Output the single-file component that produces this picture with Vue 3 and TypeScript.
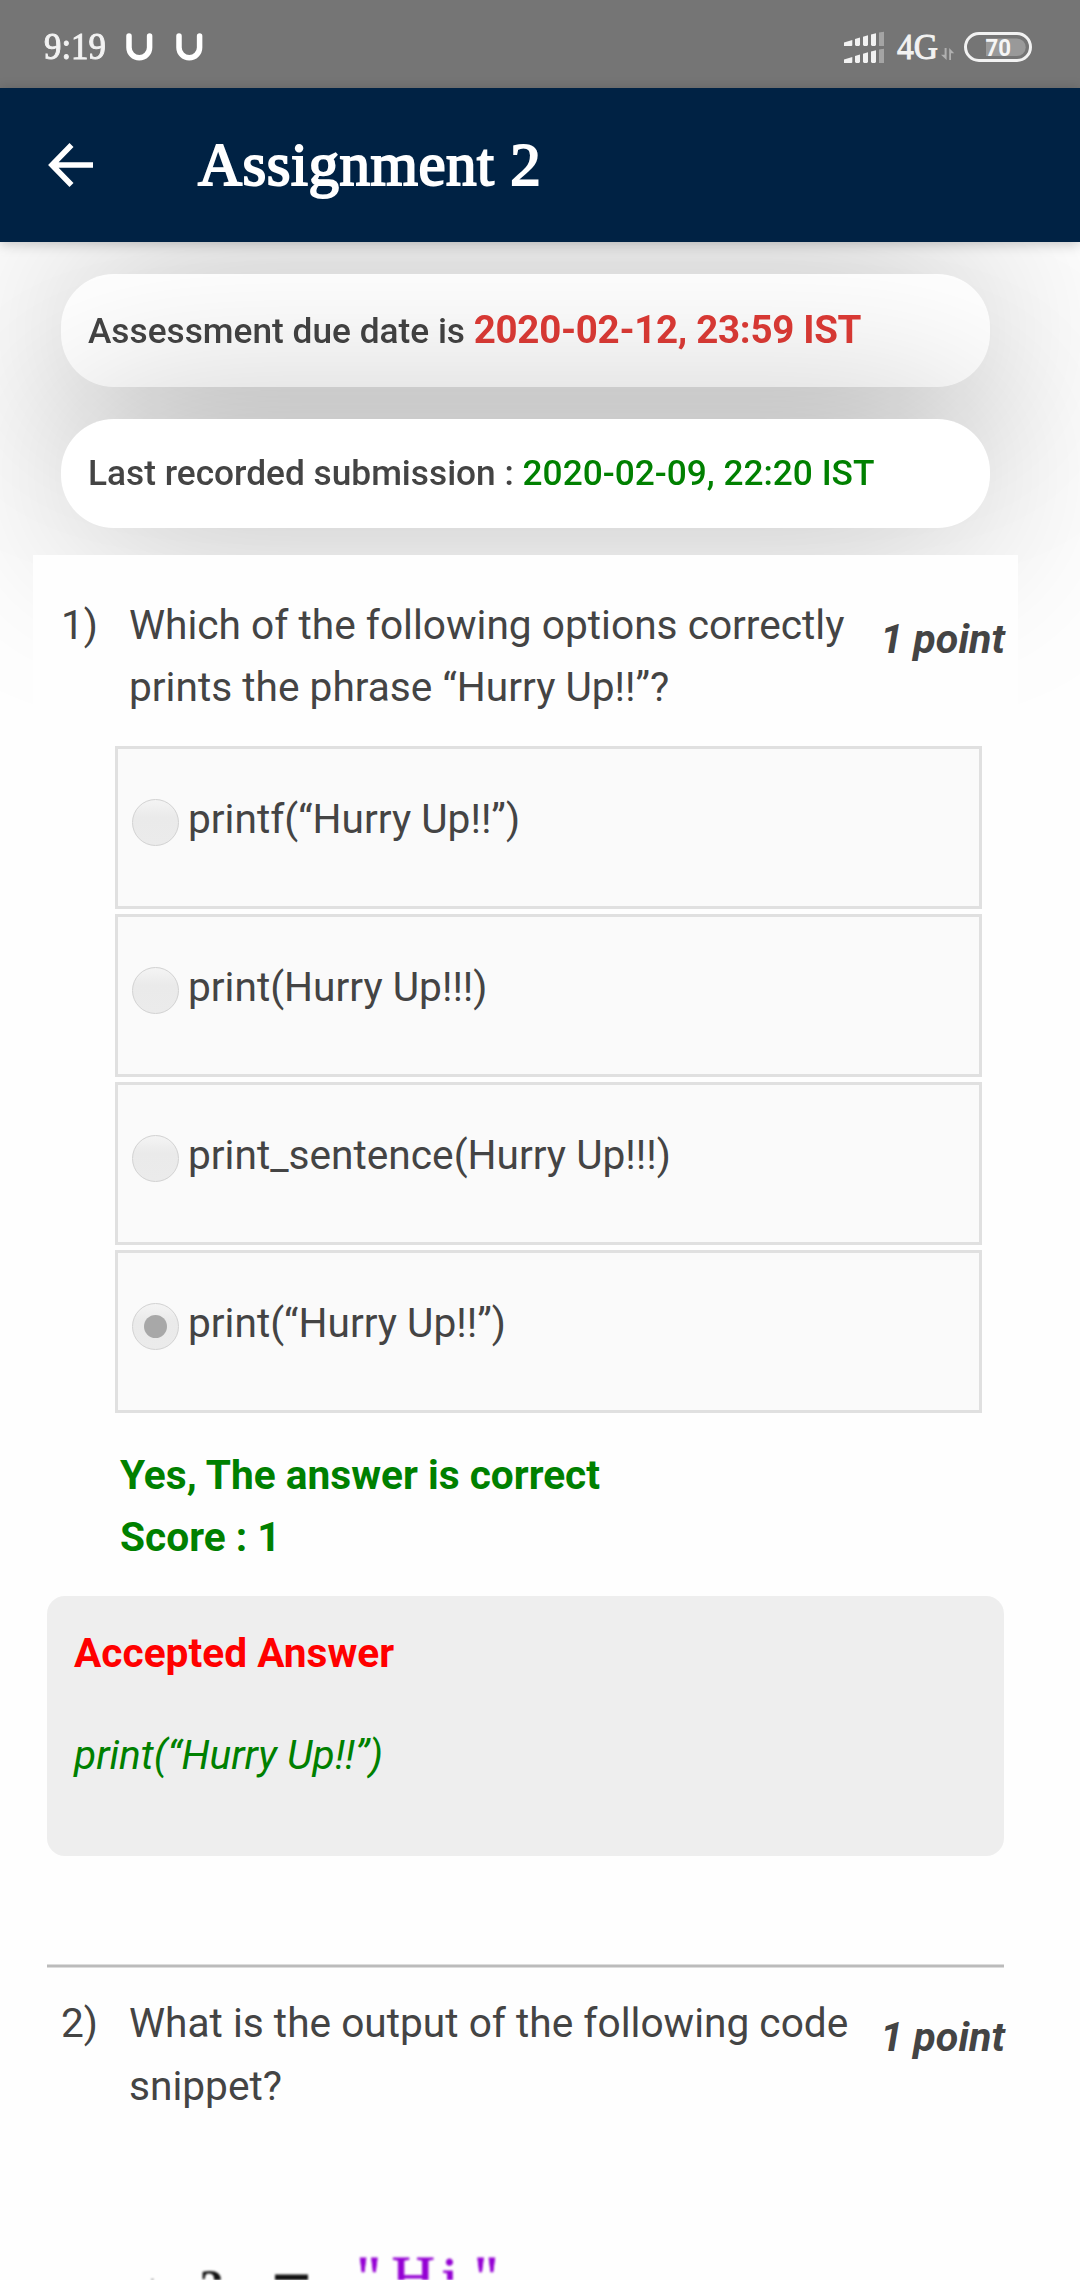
<script setup lang="ts">
interface Option {
  id: number
  label: string
  selected: boolean
}

const options: Option[] = [
  { id: 1, label: 'printf(“Hurry Up!!”)', selected: false },
  { id: 2, label: 'print(Hurry Up!!!)', selected: false },
  { id: 3, label: 'print_sentence(Hurry Up!!!)', selected: false },
  { id: 4, label: 'print(“Hurry Up!!”)', selected: true },
]
</script>

<template>
  <div class="screen">
    <div class="status">
      <span class="clock">9:19</span>
      <svg class="u" width="27" height="29" viewBox="0 0 27 29"><path d="M3 3V14.5a10.2 10.2 0 0 0 20.6 0V3" /></svg>
      <svg class="u second" width="27" height="29" viewBox="0 0 27 29"><path d="M3 3V14.5a10.2 10.2 0 0 0 20.6 0V3" /></svg>
      <svg class="indicators" width="236" height="65" viewBox="0 0 236 65">
        <g fill="#f2f2f2">
          <path d="M24 27.4L32.3 25V30a1 1 0 0 1-1 1H24z" />
          <path d="M35 24L40 22.600V30l-1 1H36l-1-1z" />
          <path d="M43 21.700L48 20.300V30l-1 1H44l-1-1z" />
          <path d="M51 19.500L56 18.300V30l-1 1H52l-1-1z" />
          <path d="M59 17.600L64 16.800V31H59z" opacity=".38" />
        </g>
        <g fill="#f2f2f2" transform="translate(0 17)">
          <path d="M24 27.4L32.3 25V30a1 1 0 0 1-1 1H24z" />
          <path d="M35 24L40 22.600V30l-1 1H36l-1-1z" />
          <path d="M43 21.700L48 20.300V30l-1 1H44l-1-1z" />
          <path d="M51 19.500L56 18.300V30l-1 1H52l-1-1z" />
          <path d="M59 17.600L64 16.800V31H59z" opacity=".38" />
        </g>
        <text class="net" x="77" y="43.500" textLength="41" lengthAdjust="spacingAndGlyphs">4G</text>
        <path d="M126.600 33V45L121 39.800H124.600V33zM129.200 45V33L134.200 38.200H131V45z" fill="#b0b0b0" />
        <path d="M166 23.500H196.900a8.800 8.800 0 0 1 0 17.600H166z" fill="#999" />
        <rect x="145.500" y="18.500" width="65" height="27" rx="13.500" fill="none" stroke="#f2f2f2" stroke-width="3" />
        <text class="pct" x="165.500" y="40.500" textLength="25.500" lengthAdjust="spacingAndGlyphs">70</text>
      </svg>
    </div>

    <header class="bar">
      <svg class="back" width="46" height="46" viewBox="0 0 46 46"><path d="M45 23H5M23.500 3L4 23L23.500 43" /></svg>
      <h1 class="title">Assignment 2</h1>
    </header>

    <main class="page">
      <div class="pill due">
        <span>Assessment due date is <b class="late">2020-02-12, 23:59 IST</b></span>
      </div>
      <div class="pill last">
        <span>Last recorded submission : <span class="ok">2020-02-09, 22:20 IST</span></span>
      </div>

      <section class="card">
        <div class="question">
          <span class="num">1)</span>
          <p class="text">Which of the following options correctly<br />prints the phrase “Hurry Up!!”?</p>
          <span class="points">1 point</span>
        </div>

        <div class="options">
          <label v-for="o in options" :key="o.id" class="option">
            <span class="radio" :class="{ on: o.selected }"></span>
            <span class="label">{{ o.label }}</span>
          </label>
        </div>

        <div class="feedback">
          <div>Yes, The answer is correct</div>
          <div>Score : 1</div>
        </div>

        <div class="accepted">
          <div class="head">Accepted Answer</div>
          <div class="answer">print(“Hurry Up!!”)</div>
        </div>

        <div class="rule"></div>

        <div class="question next">
          <span class="num">2)</span>
          <p class="text">What is the output of the following code<br />snippet?</p>
          <span class="points">1 point</span>
        </div>

        <svg class="snippet" width="500" height="30" viewBox="0 0 500 30">
          <g fill="#111">
            <text x="113" y="56.500" font-size="48">t</text>
            <text x="166.500" y="52.500" font-size="48" font-weight="700">2</text>
            <rect x="242" y="24.500" width="33" height="6" />
          </g>
          <g fill="#9400d3" stroke="#9400d3" stroke-width="0.8">
            <text x="323.500" y="47" font-size="60">"</text>
            <text x="358.500" y="46.500" font-size="60">H</text>
            <text x="408.500" y="47.500" font-size="60">i</text>
            <text x="441" y="47" font-size="60">"</text>
          </g>
        </svg>
      </section>
    </main>
  </div>
</template>

<style>
body {
  margin: 0;
  background: #fefefe;
}
</style>

<style scoped>
.screen {
  width: 1080px;
  height: 2280px;
  overflow: hidden;
  display: flex;
  flex-direction: column;
  background: #fefefe;
  color: #444;
  font-family: Roboto, sans-serif;
}
.status {
  height: 88px;
  flex: none;
  display: flex;
  align-items: flex-start;
  background: #757575;
  z-index: 2;
}
.clock {
  width: 81px;
  margin-left: 44px;
  padding-top: 25px;
  font: 37px/44px 'Liberation Serif', serif;
  color: #f2f2f2;
  -webkit-text-stroke: 1px #f2f2f2;
  transform: scaleX(0.94);
  transform-origin: 0 0;
}
.u {
  margin: 33px 0 0 1px;
  fill: none;
  stroke: #fff;
  stroke-width: 5.5;
  stroke-linecap: round;
}
.u.second {
  margin-left: 23px;
}
.indicators {
  margin: 15px 24px 0 auto;
}
.net {
  font: 36.5px 'Liberation Serif', serif;
  fill: #f2f2f2;
  stroke: #f2f2f2;
  stroke-width: 1;
}
.pct {
  font: 700 24px Roboto, sans-serif;
  fill: #f5f5f5;
}
.bar {
  height: 154px;
  flex: none;
  display: flex;
  align-items: center;
  background: #002244;
  color: #fff;
  z-index: 2;
  box-shadow: 0 2px 12px rgba(0, 0, 0, 0.22);
}
.back {
  margin-left: 48px;
  fill: none;
  stroke: #fff;
  stroke-width: 5.6;
}
.title {
  margin: 0 0 0 104px;
  font: 400 61px/70px 'Liberation Serif', serif;
  letter-spacing: 0.5px;
  -webkit-text-stroke: 2px #fff;
}
.page {
  flex: none;
  display: flex;
  flex-direction: column;
  padding: 32px 62px 0 33px;
}
.pill {
  width: 929px;
  box-sizing: border-box;
  margin-left: 28px;
  padding-left: 27px;
  flex: none;
  display: flex;
  align-items: center;
  border-radius: 53px;
  background: #fff;
  filter: drop-shadow(0 0 92px rgba(0, 0, 0, 0.29));
  font-size: 35.25px;
  font-weight: 500;
  line-height: 46px;
  white-space: nowrap;
}
.due {
  height: 113px;
}
.last {
  height: 109px;
  margin-top: 32px;
  padding-bottom: 2px;
}
.late {
  font-size: 38.5px;
  font-weight: 700;
  letter-spacing: -0.3px;
  color: #df3b36;
}
.ok {
  color: #008000;
}
.card {
  position: relative;
  width: 985px;
  height: 1725px;
  margin-top: 27px;
  box-sizing: border-box;
  padding-top: 39px;
  background: #fefefe;
  font-size: 40.65px;
  line-height: 62px;
  white-space: nowrap;
}
.question {
  display: flex;
  align-items: flex-start;
  height: 124px;
  padding: 0 13px 0 28px;
}
.next {
  line-height: 62.5px;
}
.num {
  width: 68px;
}
.text {
  margin: 0;
  flex: 1;
}
.points {
  margin-top: 14px;
  font-size: 41.25px;
  font-weight: 700;
  font-style: italic;
}
.options {
  display: flex;
  flex-direction: column;
  gap: 5px;
  width: 867px;
  margin: 28px 0 0 82px;
}
.option {
  height: 163px;
  box-sizing: border-box;
  display: flex;
  align-items: flex-start;
  padding: 39px 0 0 14px;
  border: 3px solid #e0e0e0;
  background: #fafafa;
}
.radio {
  width: 47px;
  height: 47px;
  margin-top: 11px;
  box-sizing: border-box;
  border: 1px solid #d2d2d2;
  border-radius: 50%;
  background: linear-gradient(#f4f4f4, #eaeaea 38%, #ebebeb);
  display: flex;
  align-items: center;
  justify-content: center;
}
.radio.on::after {
  content: '';
  width: 23px;
  height: 23px;
  border-radius: 50%;
  background: #a8a8a8;
}
.label {
  margin-left: 9px;
}
.feedback {
  margin: 31px 0 0 87px;
  font-weight: 700;
  color: #008000;
}
.accepted {
  width: 957px;
  height: 260px;
  margin: 28px 0 0 14px;
  box-sizing: border-box;
  padding: 26px 27px;
  border-radius: 18px;
  background: #eee;
}
.head {
  font-weight: 700;
  color: #f00;
}
.answer {
  margin-top: 40px;
  font-style: italic;
  color: #008000;
}
.rule {
  width: 957px;
  height: 4px;
  margin: 108px 0 24px 14px;
  background: linear-gradient(#dcdcdc 25%, #bbb 25%, #bbb 75%, #dcdcdc 75%);
}
.snippet {
  display: block;
  margin-top: 134px;
  font-family: 'Liberation Serif', serif;
  filter: blur(0.8px);
}
</style>
